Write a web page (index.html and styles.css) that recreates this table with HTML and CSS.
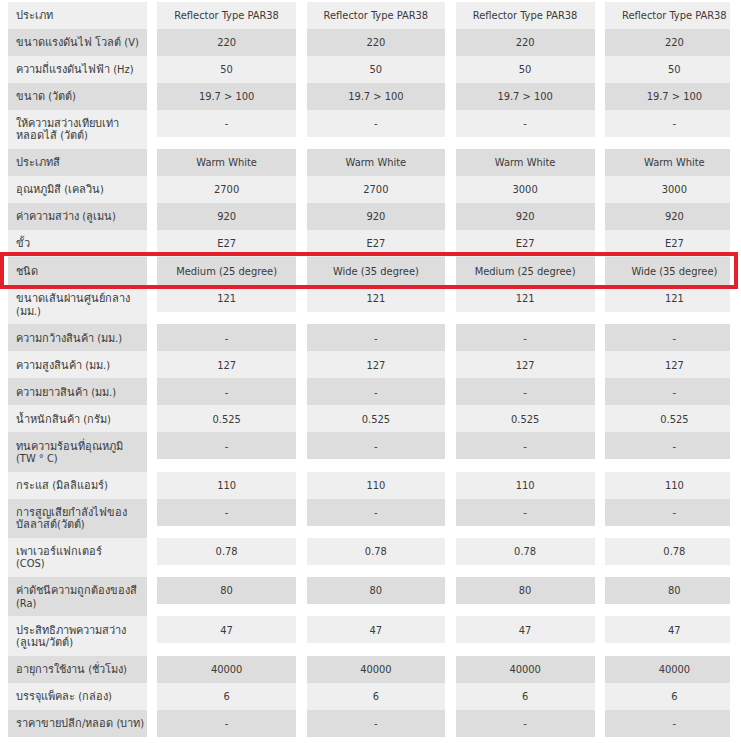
FILE: index.html
```html
<!DOCTYPE html>
<html lang="th">
<head>
<meta charset="utf-8">
<title>Specifications</title>
<link rel="stylesheet" href="styles.css">
</head>
<body>
<div class="page">
  <div class="clip">
    <div class="specs">
      <div class="row light"><div class="label"><span class="ln">ประเภท</span></div><div class="val">Reflector Type PAR38</div><div class="val">Reflector Type PAR38</div><div class="val">Reflector Type PAR38</div><div class="val">Reflector Type PAR38</div></div>
      <div class="row dark"><div class="label"><span class="ln">ขนาดแรงดันไฟ โวลต์ (V)</span></div><div class="val">220</div><div class="val">220</div><div class="val">220</div><div class="val">220</div></div>
      <div class="row light"><div class="label"><span class="ln">ความถี่แรงดันไฟฟ้า (Hz)</span></div><div class="val">50</div><div class="val">50</div><div class="val">50</div><div class="val">50</div></div>
      <div class="row dark"><div class="label"><span class="ln">ขนาด (วัตต์)</span></div><div class="val">19.7 &gt; 100</div><div class="val">19.7 &gt; 100</div><div class="val">19.7 &gt; 100</div><div class="val">19.7 &gt; 100</div></div>
      <div class="row light"><div class="label"><span class="ln">ให้ความสว่างเทียบเท่า</span><span class="ln">หลอดไส้ (วัตต์)</span></div><div class="val">-</div><div class="val">-</div><div class="val">-</div><div class="val">-</div></div>
      <div class="row dark"><div class="label"><span class="ln">ประเภทสี</span></div><div class="val">Warm White</div><div class="val">Warm White</div><div class="val">Warm White</div><div class="val">Warm White</div></div>
      <div class="row light"><div class="label"><span class="ln">อุณหภูมิสี (เคลวิน)</span></div><div class="val">2700</div><div class="val">2700</div><div class="val">3000</div><div class="val">3000</div></div>
      <div class="row dark"><div class="label"><span class="ln">ค่าความสว่าง (ลูเมน)</span></div><div class="val">920</div><div class="val">920</div><div class="val">920</div><div class="val">920</div></div>
      <div class="row light"><div class="label"><span class="ln">ขั้ว</span></div><div class="val">E27</div><div class="val">E27</div><div class="val">E27</div><div class="val">E27</div></div>
      <div class="row dark tall"><div class="label"><span class="ln">ชนิด</span></div><div class="val">Medium (25 degree)</div><div class="val">Wide (35 degree)</div><div class="val">Medium (25 degree)</div><div class="val">Wide (35 degree)</div></div>
      <div class="row light"><div class="label"><span class="ln">ขนาดเส้นผ่านศูนย์กลาง</span><span class="ln">(มม.)</span></div><div class="val">121</div><div class="val">121</div><div class="val">121</div><div class="val">121</div></div>
      <div class="row dark"><div class="label"><span class="ln">ความกว้างสินค้า (มม.)</span></div><div class="val">-</div><div class="val">-</div><div class="val">-</div><div class="val">-</div></div>
      <div class="row light"><div class="label"><span class="ln">ความสูงสินค้า (มม.)</span></div><div class="val">127</div><div class="val">127</div><div class="val">127</div><div class="val">127</div></div>
      <div class="row dark"><div class="label"><span class="ln">ความยาวสินค้า (มม.)</span></div><div class="val">-</div><div class="val">-</div><div class="val">-</div><div class="val">-</div></div>
      <div class="row light"><div class="label"><span class="ln">น้ำหนักสินค้า (กรัม)</span></div><div class="val">0.525</div><div class="val">0.525</div><div class="val">0.525</div><div class="val">0.525</div></div>
      <div class="row dark"><div class="label"><span class="ln">ทนความร้อนที่อุณหภูมิ</span><span class="ln">(TW ° C)</span></div><div class="val">-</div><div class="val">-</div><div class="val">-</div><div class="val">-</div></div>
      <div class="row light"><div class="label"><span class="ln">กระแส (มิลลิแอมร์)</span></div><div class="val">110</div><div class="val">110</div><div class="val">110</div><div class="val">110</div></div>
      <div class="row dark"><div class="label"><span class="ln">การสูญเสียกำลังไฟของ</span><span class="ln">บัลลาสต์(วัตต์)</span></div><div class="val">-</div><div class="val">-</div><div class="val">-</div><div class="val">-</div></div>
      <div class="row light"><div class="label"><span class="ln">เพาเวอร์แฟกเตอร์</span><span class="ln">(COS)</span></div><div class="val">0.78</div><div class="val">0.78</div><div class="val">0.78</div><div class="val">0.78</div></div>
      <div class="row dark"><div class="label"><span class="ln">ค่าดัชนีความถูกต้องของสี</span><span class="ln">(Ra)</span></div><div class="val">80</div><div class="val">80</div><div class="val">80</div><div class="val">80</div></div>
      <div class="row light"><div class="label"><span class="ln">ประสิทธิภาพความสว่าง</span><span class="ln">(ลูเมน/วัตต์)</span></div><div class="val">47</div><div class="val">47</div><div class="val">47</div><div class="val">47</div></div>
      <div class="row dark"><div class="label"><span class="ln">อายุการใช้งาน (ชั่วโมง)</span></div><div class="val">40000</div><div class="val">40000</div><div class="val">40000</div><div class="val">40000</div></div>
      <div class="row light"><div class="label"><span class="ln">บรรจุแพ็คละ (กล่อง)</span></div><div class="val">6</div><div class="val">6</div><div class="val">6</div><div class="val">6</div></div>
      <div class="row dark"><div class="label"><span class="ln">ราคาขายปลีก/หลอด (บาท)</span></div><div class="val">-</div><div class="val">-</div><div class="val">-</div><div class="val">-</div></div>
    </div>
  </div>
  <div class="highlight"></div>
</div>
</body>
</html>
```
FILE: styles.css
```css
html, body {
  margin: 0;
  padding: 0;
  background: #ffffff;
}

.page {
  position: relative;
  padding: 2px 0 0 8px;
}

.clip {
  width: 722px;
  overflow: hidden;
}

.specs {
  display: grid;
  grid-template-columns: repeat(5, 138.75px);
  column-gap: 10.5px;
  font-family: "DejaVu Sans Condensed", "DejaVu Sans", "Noto Sans", sans-serif;
  font-size: 11px;
  line-height: 12.3px;
  color: #3a3a3a;
}

.row {
  display: contents;
}

.label,
.val {
  padding: 8.2px 0 6.5px 8px;
  white-space: nowrap;
}

.val {
  padding-left: 0;
  text-align: center;
  height: 12.3px;
}

.ln {
  display: block;
  height: 12.3px;
  overflow: visible;
}

.light > div {
  background: #efefef;
}

.dark > div {
  background: #dddddd;
}

.tall > div {
  padding-top: 8.7px;
  padding-bottom: 7px;
}

.highlight {
  position: absolute;
  left: 0;
  top: 252px;
  width: 738px;
  height: 37px;
  box-sizing: border-box;
  border: 4px solid #e4202a;
  pointer-events: none;
}
```
